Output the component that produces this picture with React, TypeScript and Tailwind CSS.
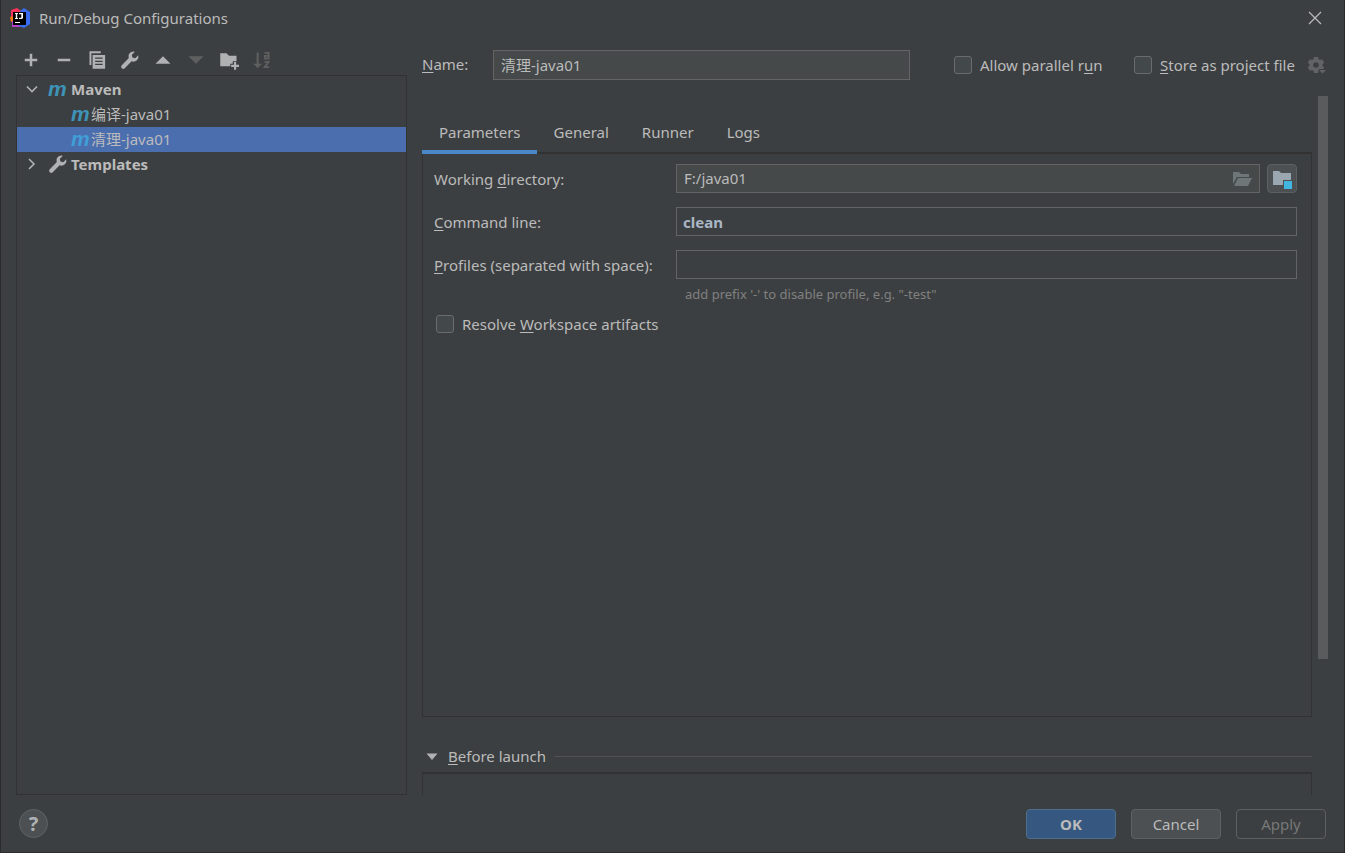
import { useState, type ReactNode } from 'react'

const tabs = ['Parameters', 'General', 'Runner', 'Logs']

function MavenIcon({ selected = false }: { selected?: boolean }) {
  return (
    <span
      aria-hidden="true"
      className={`flex h-5 w-5 items-center font-['Liberation_Sans',sans-serif] text-[21px] leading-4 font-bold italic ${selected ? 'text-[#3f9fd6]' : 'text-[#3e93b8]'}`}
    >
      m
    </span>
  )
}

function WrenchIcon() {
  return (
    <svg viewBox="0 0 16 16" className="size-5 shrink-0" fill="#afb1b3">
      <path d="M14.6 4.1 12.2 6.5 9.9 6 9.5 3.8 11.9 1.4A4 4 0 0 0 6.9 6.6L1.4 12.1a1.5 1.5 0 0 0 2.4 2.4L9.3 9A4 4 0 0 0 14.6 4.1z" />
    </svg>
  )
}

function IdeaLogo() {
  return (
    <svg viewBox="0 0 20 20" className="size-5" aria-hidden="true">
      <path d="M1 2 7 0l4 3-4 7-6-1z" fill="#fe315d" />
      <path d="M0 9l4-1 2 5-5 1z" fill="#f97a12" />
      <path d="M2 13l6-3 6 7-4 2-8 0z" fill="#b441c9" />
      <path d="M10 3l4-3 6 4v12l-6 4-5-2z" fill="#3a6cf0" />
      <path d="M3 4h13v13H3z" fill="#000" />
      <path d="M5 5h3v1H7.200v4H8v1H5v-1h.8V6H5zM9 5h4v5l-1 1H9v-1.200h2.300V6.200H9zM5 14h5v1H5z" fill="#fff" />
    </svg>
  )
}

function ToolButton({ label, disabled = false, children }: { label: string; disabled?: boolean; children: ReactNode }) {
  return (
    <button type="button" aria-label={label} title={label} disabled={disabled} className="size-5">
      <svg viewBox="0 0 16 16" className="size-5" fill={disabled ? '#5e6060' : '#afb1b3'}>
        {children}
      </svg>
    </button>
  )
}

function Checkbox({ className = '', children }: { className?: string; children: ReactNode }) {
  return (
    <label className={`flex items-center gap-2 whitespace-nowrap ${className}`}>
      <input type="checkbox" className="size-[18px] appearance-none rounded-[3px] border border-[#6b6b6b] bg-[#43494a] checked:bg-[#4a88c7]" />
      <span>{children}</span>
    </label>
  )
}

function Key({ children }: { children: string }) {
  return <span className="underline underline-offset-2">{children}</span>
}

export default function App() {
  const [activeTab, setActiveTab] = useState('Parameters')
  const [name, setName] = useState('清理-java01')
  const [directory, setDirectory] = useState('F:/java01')
  const [command, setCommand] = useState('clean')
  const [profiles, setProfiles] = useState('')

  return (
    <div className="flex min-h-screen flex-col border-x border-b border-[#2b2b2b] bg-[#3c3f41] font-['Noto_Sans','Noto_Sans_CJK_SC',sans-serif] text-[15px] leading-5 text-[#bbbbbb]">
      <header className="flex h-[37px] items-center justify-between pr-[19px] pb-0.5 pl-[9px]">
        <div className="flex items-center gap-[9px]">
          <IdeaLogo />
          <h1>Run/Debug Configurations</h1>
        </div>
        <button type="button" aria-label="Close" className="size-5">
          <svg viewBox="0 0 20 20" className="size-5" stroke="#bbbbbb" strokeWidth="1.2">
            <path d="M4 4l12 12M16 4 4 16" />
          </svg>
        </button>
      </header>

      <main className="flex flex-1 pl-[15px]">
        <aside className="flex w-[391px] shrink-0 flex-col">
          <div className="flex h-[38px] items-center gap-[13px] pt-2 pl-[5px]">
            <ToolButton label="Add">
              <path d="M7 3h2v4h4v2H9v4H7V9H3V7h4z" />
            </ToolButton>
            <ToolButton label="Remove">
              <path d="M3 7h10v2H3z" />
            </ToolButton>
            <ToolButton label="Copy">
              <path d="M2 1h9v1.500H3.500V12H2z" />
              <path fillRule="evenodd" d="M4.500 4h10v11h-10zM6.500 6v1h6V6zm0 2.500v1h6v-1zm0 2.500v1h6v-1z" />
            </ToolButton>
            <button type="button" aria-label="Edit templates" className="size-5">
              <WrenchIcon />
            </button>
            <ToolButton label="Move up">
              <path d="M8 5l6 6H2z" />
            </ToolButton>
            <ToolButton label="Move down" disabled>
              <path d="M8 11 2 5h12z" />
            </ToolButton>
            <ToolButton label="New folder">
              <path d="M1 2.500h5l2 2h6V9h-3v2H9v2H1z" />
              <path d="M12 9.500h1.700v2.300H16v1.700h-2.300v2.300H12v-2.300H9.700v-1.700H12z" />
            </ToolButton>
            <ToolButton label="Sort" disabled>
              <path d="M3.700 2h1.600v9H8l-3.500 3.500L1 11h2.700z" />
              <path d="M10 2.300h3.300v4.500H10.300V4.600h3M10 9.500h3.300l-3.200 4.200h3.600" fill="none" stroke="#5e6060" strokeWidth="1.400" />
            </ToolButton>
          </div>

          <ul className="flex-1 border border-[#323232]">
            <li className="flex h-[26px] items-center pl-[5px] font-bold">
              <svg viewBox="0 0 20 20" className="size-5" fill="none" stroke="#afb1b3" strokeWidth="1.6">
                <path d="M5 7.500l5 5 5-5" />
              </svg>
              <span className="mr-[3px] ml-1.5"><MavenIcon /></span>
              Maven
            </li>
            <li className="flex h-[25px] items-center pb-0.5 pl-[54px]">
              <MavenIcon />
              编译-java01
            </li>
            <li className="flex h-[25px] items-center bg-[#4b6eaf] pb-0.5 pl-[54px]">
              <MavenIcon selected />
              清理-java01
            </li>
            <li className="flex h-[25px] items-center pb-0.5 pl-[5px] font-bold">
              <svg viewBox="0 0 20 20" className="size-5" fill="none" stroke="#afb1b3" strokeWidth="1.6">
                <path d="M7 5l5 5-5 5" />
              </svg>
              <span className="mr-[3px] ml-1.5"><WrenchIcon /></span>
              Templates
            </li>
          </ul>
        </aside>

        <section className="flex min-w-0 flex-1 flex-col pt-[13px] pl-[15px]">
          <div className="flex h-[30px] items-center pr-[18px]">
            <label htmlFor="name" className="w-[71px] pb-0.5"><Key>N</Key>ame:</label>
            <input
              id="name"
              value={name}
              onChange={(e) => setName(e.target.value)}
              className="h-[30px] min-w-0 flex-1 border border-[#646464] bg-[#45494a] px-[7px] pb-0.5 outline-none"
            />
            <div className="ml-11 flex items-center gap-7">
              <Checkbox className="min-w-[152px]">Allow parallel r<Key>u</Key>n</Checkbox>
              <div className="flex items-center gap-1">
                <Checkbox className="min-w-[168px]"><Key>S</Key>tore as project file</Checkbox>
                <button type="button" aria-label="Storage options" disabled className="size-5">
                  <svg viewBox="0 0 20 20" className="size-5" fill="#616365">
                    <path fillRule="evenodd" d="M8 2h4l.5 2.200 1.500.9 2.200-.8 2 3.400-1.700 1.500v1.700l1.700 1.500-1 1.600h-4L12.500 15 12 18H8l-.5-2.200-1.500-.9-2.200.8-2-3.400 1.700-1.500V9.200L1.800 7.700l2-3.400 2.200.8 1.500-.9zM10 7.200a2.800 2.800 0 1 0 0 5.600 2.800 2.800 0 0 0 0-5.600z" />
                    <path d="M13 15h7l-3.500 3.500z" />
                  </svg>
                </button>
              </div>
            </div>
          </div>

          <div className="mt-4 flex flex-1 gap-1.5 pr-4">
            <div className="flex min-w-0 flex-1 flex-col pt-3.5">
              <div role="tablist" className="flex h-11 border-b-2 border-[#323232]">
                {tabs.map((tab) => (
                  <button
                    key={tab}
                    type="button"
                    role="tab"
                    aria-selected={activeTab === tab}
                    onClick={() => setActiveTab(tab)}
                    className={`-mb-0.5 border-b-4 pt-1 pr-4 pl-[17px] ${activeTab === tab ? 'border-[#4a88c7]' : 'border-transparent'}`}
                  >
                    {tab}
                  </button>
                ))}
              </div>

              <div className="flex-1 border-x border-b border-[#323232] pt-2.5 pr-3.5 pl-[11px]">
                <div className="grid grid-cols-[242px_1fr] items-center gap-y-3.5">
                  <label htmlFor="directory">Working <Key>d</Key>irectory:</label>
                  <div className="flex gap-[7px]">
                    <div className="flex h-[29px] flex-1 items-center border border-[#646464] bg-[#45494a] pr-[7px]">
                      <input
                        id="directory"
                        value={directory}
                        onChange={(e) => setDirectory(e.target.value)}
                        className="min-w-0 flex-1 px-[7px] pb-0.5 outline-none"
                      />
                      <button type="button" aria-label="Browse" className="size-5">
                        <svg viewBox="0 0 20 20" className="size-5" fill="#6e7678">
                          <path d="M1 3h6l2 2h8v3H5l-4 7z" />
                          <path d="M6 9h14l-4 8H2z" />
                        </svg>
                      </button>
                    </div>
                    <button type="button" aria-label="Insert macros" className="flex h-[29px] w-[30px] items-center justify-center rounded-[4px] border border-[#5e6060] bg-[#4c5052]">
                      <svg viewBox="0 0 20 20" className="size-5">
                        <path d="M1 2h6l2 2h10v12H1z" fill="#9aa7b0" />
                        <path d="M11 11h9v9h-9z" fill="#4c5052" />
                        <path d="M12 12h8v8h-8z" fill="#40b6e0" />
                      </svg>
                    </button>
                  </div>

                  <label htmlFor="command"><Key>C</Key>ommand line:</label>
                  <input
                    id="command"
                    value={command}
                    onChange={(e) => setCommand(e.target.value)}
                    className="h-[29px] w-full border border-[#646464] px-1.5 font-bold text-[#a9b7c6] outline-none"
                  />

                  <label htmlFor="profiles"><Key>P</Key>rofiles (separated with space):</label>
                  <input
                    id="profiles"
                    value={profiles}
                    onChange={(e) => setProfiles(e.target.value)}
                    className="h-[29px] w-full border border-[#646464] px-1.5 font-bold text-[#a9b7c6] outline-none"
                  />
                </div>
                <p className="mt-[5px] ml-[251px] text-[13px] text-[#808080]">add prefix '-' to disable profile, e.g. "-test"</p>
                <div className="mt-2.5 flex pl-0.5">
                  <Checkbox>Resolve <Key>W</Key>orkspace artifacts</Checkbox>
                </div>
              </div>

              <div className="mt-6 flex h-[31px] items-center">
                <button type="button" className="flex items-center gap-1.5">
                  <svg viewBox="0 0 20 20" className="size-5" fill="#afb1b3">
                    <path d="M4.500 6.500h11L10 13z" />
                  </svg>
                  <span className="pb-0.5"><Key>B</Key>efore launch</span>
                </button>
                <span className="ml-2 h-px flex-1 bg-[#515151]" />
              </div>
              <div className="h-[23px] border-x border-t-2 border-[#323232]" />
            </div>

            <div className="flex w-2.5 flex-col">
              <div className="mb-[136px] flex-1 bg-[#595b5d]" />
            </div>
          </div>
        </section>
      </main>

      <footer className="flex h-[57px] items-center justify-between px-[18px]">
        <button type="button" aria-label="Help" className="size-[29px] rounded-full border border-[#5e6464] bg-[#4c5052] text-xl leading-5 font-bold text-[#afb1b3]">
          ?
        </button>
        <div className="flex gap-[15px]">
          <button type="submit" className="h-[30px] w-[90px] rounded-[4px] border border-[#4c708c] bg-[#365880] font-bold">OK</button>
          <button type="button" className="h-[30px] w-[90px] rounded-[4px] border border-[#5e6060] bg-[#4c5052]">Cancel</button>
          <button type="button" disabled className="h-[30px] w-[90px] rounded-[4px] border border-[#5e6060] text-[#777777]">Apply</button>
        </div>
      </footer>
    </div>
  )
}
